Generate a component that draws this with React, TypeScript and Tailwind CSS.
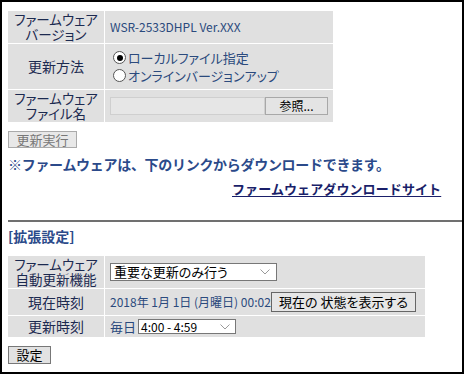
import React from "react";

const font = "font-['Noto_Sans_CJK_JP','Noto_Sans',sans-serif]";

function Chevron() {
  return (
    <svg width="10" height="6" viewBox="0 0 10 6" className="shrink-0">
      <polyline points="0.5,0.5 5,5 9.5,0.5" fill="none" stroke="#9a9a9a" strokeWidth="1" />
    </svg>
  );
}

function Radio({ checked }: { checked?: boolean }) {
  return (
    <span className="w-[13px] h-[13px] rounded-full border border-[#555] bg-white flex items-center justify-center shrink-0">
      {checked && <span className="w-[6px] h-[6px] rounded-full bg-black" />}
    </span>
  );
}

export default function App() {
  return (
    <div className={`w-[464px] h-[374px] border-2 border-black bg-white ${font} [font-feature-settings:'palt'] overflow-hidden`}>
      <div className="pt-[9px] pl-[6px]">
        {/* Table 1 */}
        <div className="grid grid-cols-[96px_228px] grid-rows-[32px_45px_32px] gap-px">
          <div className="bg-[#e0e0e0] flex flex-col items-center justify-center text-[13.5px] leading-[15px] text-[#1c2a50]">
            <span>ファームウェア</span>
            <span>バージョン</span>
          </div>
          <div className="bg-[#e0e0e0] flex items-center pl-[5px] text-[12px] text-[#2b4a7d]">
            WSR-2533DHPL Ver.XXX
          </div>
          <div className="bg-[#e0e0e0] flex items-center justify-center text-[14px] text-[#1c2a50]">
            更新方法
          </div>
          <div className="bg-[#e0e0e0] flex flex-col justify-center gap-[5px] pl-[8px] text-[13px] leading-[13px] text-[#2b4a7d]">
            <div className="flex items-center gap-[2px]">
              <Radio checked />
              <span>ローカルファイル指定</span>
            </div>
            <div className="flex items-center gap-[2px]">
              <Radio />
              <span>オンラインバージョンアップ</span>
            </div>
          </div>
          <div className="bg-[#e0e0e0] flex flex-col items-center justify-center text-[13.5px] leading-[15px] text-[#1c2a50]">
            <span>ファームウェア</span>
            <span>ファイル名</span>
          </div>
          <div className="bg-[#e0e0e0] flex items-center pl-[5px]">
            <div className="w-[155px] h-[18px] border border-[#cfcfcf] bg-[#e6e6e6]" />
            <div className="w-[63px] h-[18px] border border-[#a8a8a8] bg-[#e4e4e4] flex items-center justify-center text-[12px] text-black">
              参照...
            </div>
          </div>
        </div>

        {/* Update button */}
        <div className="mt-[9px] w-[69px] h-[17px] border border-[#aaaaaa] bg-[#e8e8e8] flex items-center justify-center text-[13px] text-[#777]">
          更新実行
        </div>

        <div className="mt-[8px] text-[14px] leading-[16px] font-bold text-[#2b4a8a] [font-feature-settings:normal] tracking-[-0.3px]">
          ※ファームウェアは、下のリンクからダウンロードできます。
        </div>
        <div className="mt-[9px] pl-[224px] text-[13px] leading-[16px] font-bold text-[#1a1f6a] underline underline-offset-[2px] [font-feature-settings:normal] tracking-[0.1px]">
          ファームウェアダウンロードサイト
        </div>
      </div>

      <div className="mt-[23px] ml-[6px] h-[2px] bg-[#707070]" />

      <div className="pl-[6px]">
        <div className="mt-[6px] text-[14px] leading-[16px] font-bold text-[#2b4a8a]">[拡張設定]</div>

        {/* Table 2 */}
        <div className="mt-[12px] grid grid-cols-[96px_320px] grid-rows-[32px_26px_21px] gap-px">
          <div className="bg-[#e0e0e0] flex flex-col items-center justify-center text-[13.5px] leading-[15px] text-[#1c2a50]">
            <span>ファームウェア</span>
            <span>自動更新機能</span>
          </div>
          <div className="bg-[#e0e0e0] flex items-center pl-[5px]">
            <div className="w-[167px] h-[18px] border border-[#777] bg-white flex items-center justify-between pl-[3px] pr-[6px] text-[13px] text-black">
              <span>重要な更新のみ行う</span>
              <Chevron />
            </div>
          </div>
          <div className="bg-[#e0e0e0] flex items-center justify-center text-[14px] text-[#1c2a50]">
            現在時刻
          </div>
          <div className="bg-[#e0e0e0] flex items-center pl-[5px] text-[12px] text-[#2b4a7d]">
            <span className="w-[161px]">2018年 1月 1日 (月曜日) 00:02</span>
            <div className="w-[145px] h-[20px] border border-[#666] bg-[#e6e6e6] flex items-center justify-center text-[13px] text-black">
              現在の 状態を表示する
            </div>
          </div>
          <div className="bg-[#e0e0e0] flex items-center justify-center text-[14px] text-[#1c2a50]">
            更新時刻
          </div>
          <div className="bg-[#e0e0e0] flex items-center pl-[5px] text-[13px] text-[#2b4a7d]">
            <span className="w-[28px]">毎日</span>
            <div className="w-[98px] h-[15px] border border-[#777] bg-white flex items-center justify-between pl-[2px] pr-[5px] text-[12px] leading-[12px] text-black">
              <span>4:00 - 4:59</span>
              <Chevron />
            </div>
          </div>
        </div>

        <div className="mt-[9px] w-[43px] h-[18px] border border-[#777] bg-[#e2e2e2] flex items-center justify-center text-[13px] text-black">
          設定
        </div>
      </div>
    </div>
  );
}
